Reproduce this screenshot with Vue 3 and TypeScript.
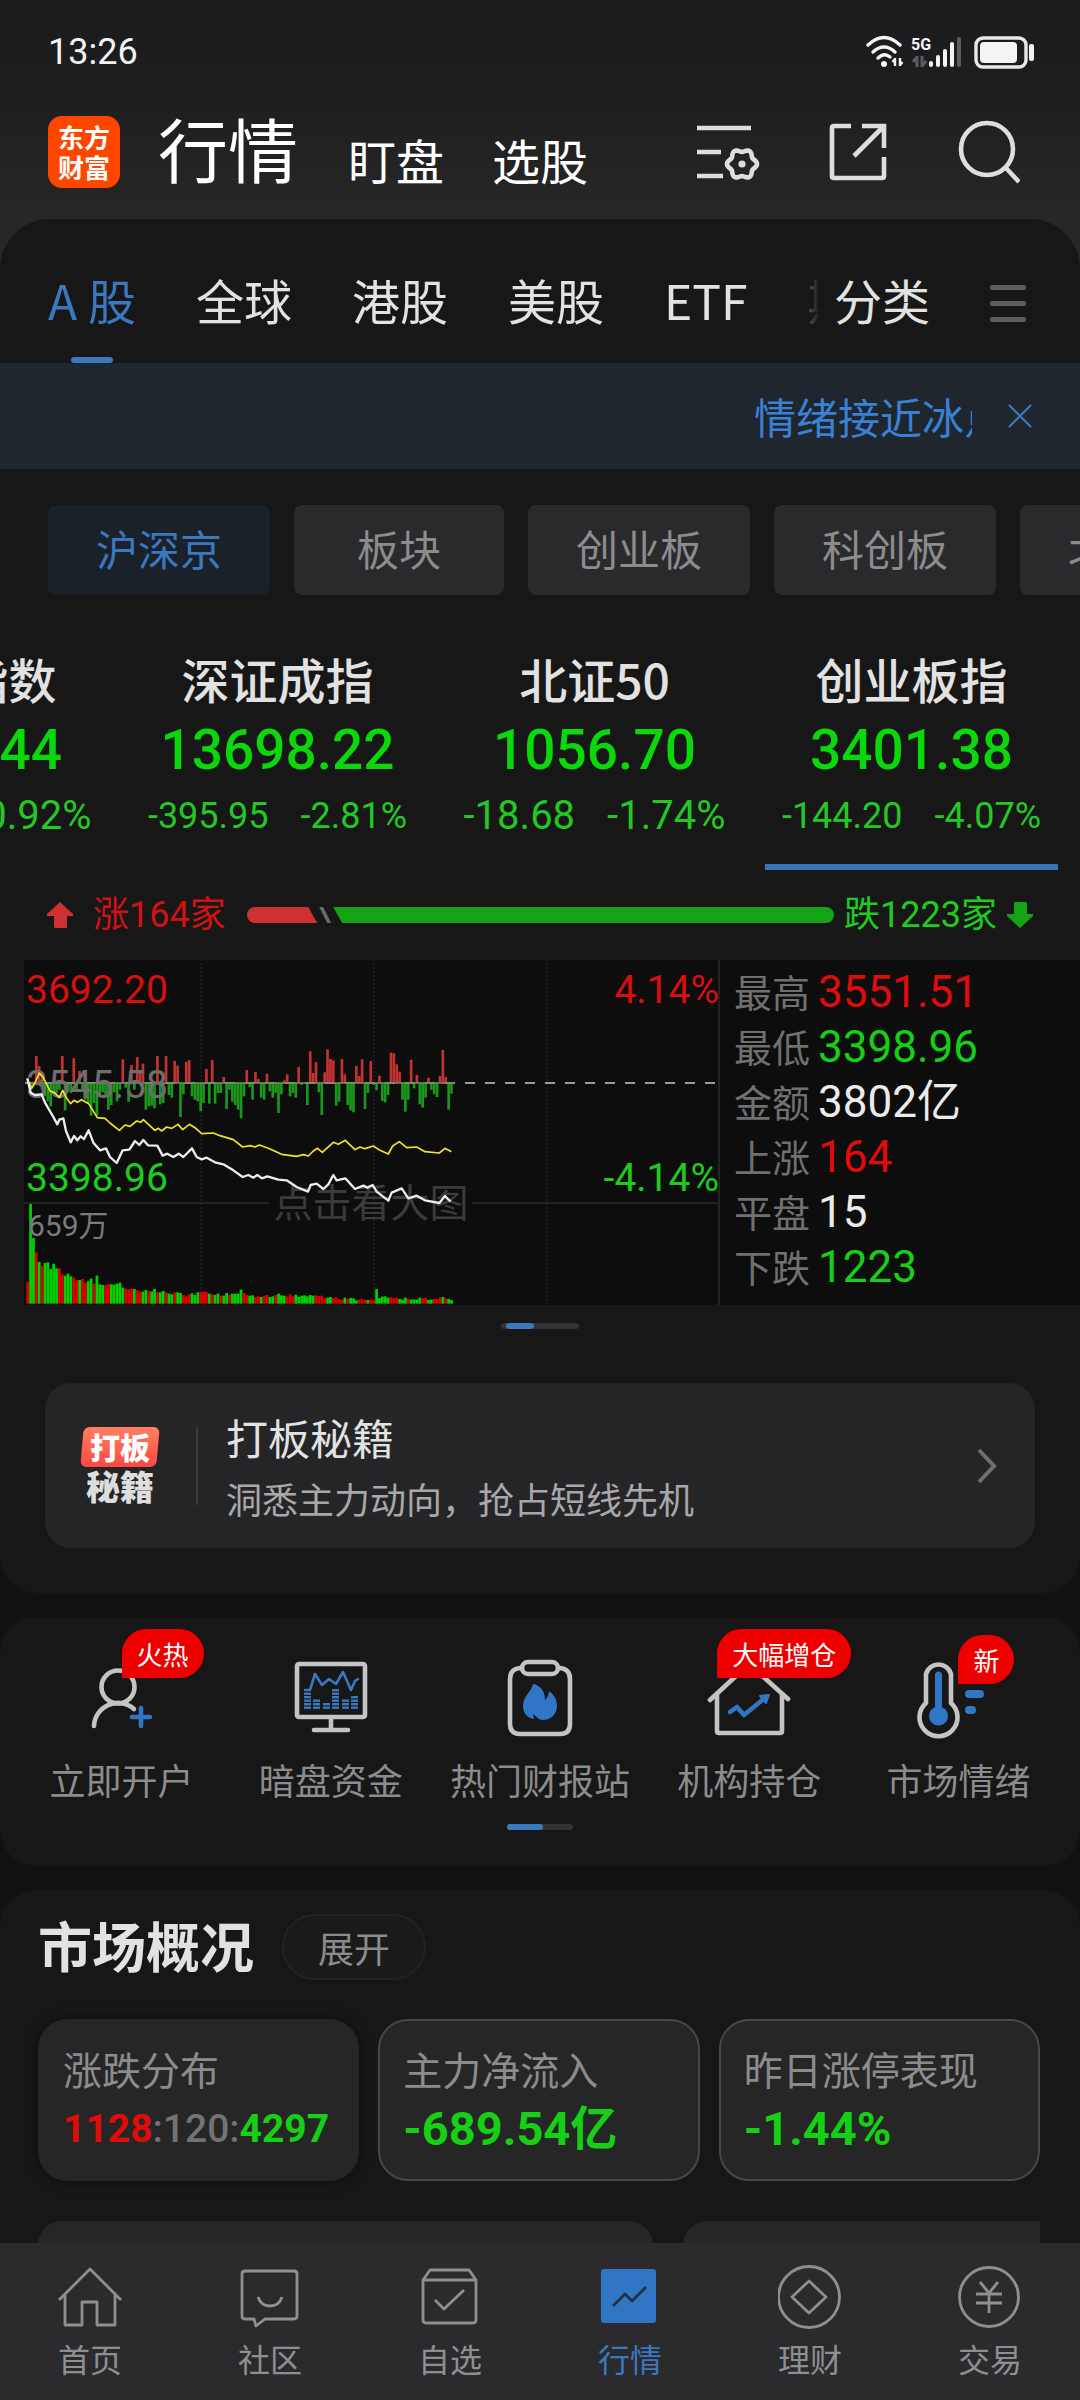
<script setup lang="ts">
import { ref } from 'vue'

interface IndexQuote {
  name: string
  value: string
  change: string
  percent: string
  compact: boolean
}

interface Stat {
  label: string
  value: string
  tone: string
}

const sections = ['盯盘', '选股']
const markets = ['A 股', '全球', '港股', '美股', 'ETF', '期货']
const activeMarket = ref('A 股')

const boards = ['沪深京', '板块', '创业板', '科创板', '北交所']
const activeBoard = ref('沪深京')

const quotes: IndexQuote[] = [
  { name: '上证指数', value: '3954.44', change: '-36.62', percent: '-0.92%', compact: false },
  { name: '深证成指', value: '13698.22', change: '-395.95', percent: '-2.81%', compact: true },
  { name: '北证50', value: '1056.70', change: '-18.68', percent: '-1.74%', compact: false },
  { name: '创业板指', value: '3401.38', change: '-144.20', percent: '-4.07%', compact: true },
]
const activeQuote = ref('创业板指')

const stats: Stat[] = [
  { label: '最高', value: '3551.51', tone: 'up' },
  { label: '最低', value: '3398.96', tone: 'down' },
  { label: '金额', value: '3802亿', tone: 'flat' },
  { label: '上涨', value: '164', tone: 'up' },
  { label: '平盘', value: '15', tone: 'flat' },
  { label: '下跌', value: '1223', tone: 'down' },
]

const tools = [
  { id: 'account', label: '立即开户', badge: '火热' },
  { id: 'monitor', label: '暗盘资金', badge: '' },
  { id: 'report', label: '热门财报站', badge: '' },
  { id: 'holding', label: '机构持仓', badge: '大幅增仓' },
  { id: 'mood', label: '市场情绪', badge: '新' },
]

const navItems = ['首页', '社区', '自选', '行情', '理财', '交易']
const activeNav = ref('行情')

/* Per-minute series, in thirds of a chart unit */
const STEP = 8.65
const BASE = 126
const FLOOR = 788

const momentum: number[] = [
  0, -16, -10, 81, 51, -20, -40, -55, -70, -30, -30, -20, 81, -82, -25, -30, 74, -20, 36, -25,
  -50, -60, -98, -60, -98, -40, -28, -35, -80, -66, -28, -55, -20, 71, -14, -56, 54, -20, 78, 36,
  58, -80, -70, -68, -76, 81, -64, -60, 81, -36, -44, 66, 52, -102, -34, 63, 69, -40, -50, -55,
  -84, -60, 42, -62, 69, -62, -30, -30, 18, -78, -20, -56, -66, -80, -106, -40, 39, -12, -50, 33,
  12, -44, -50, 28, -25, -44, -30, -90, -34, 8, 26, -40, -30, -44, 48, -6, 0, -66, 95, 30,
  63, -28, -96, 32, 101, 72, 68, -68, -56, 72, 26, -66, -82, -88, 51, 21, 71, -78, -30, 66,
  -6, -22, 22, -54, -58, -36, 91, 89, 56, 34, -50, -86, -50, 70, -16, 24, -64, -74, -44, 16,
  -20, -34, -42, 21, 99, 18, -80, -32,
]

const volume: number[] = [
  65, 299, 197, 154, 125, 113, 122, 124, 104, 120, 106, 106, 88, 84, 90, 82, 78, 70, 71, 74,
  62, 67, 75, 60, 84, 58, 56, 56, 58, 58, 57, 60, 63, 48, 45, 43, 45, 44, 40, 37,
  36, 41, 38, 36, 44, 34, 34, 38, 34, 30, 28, 34, 34, 32, 26, 22, 28, 31, 26, 34,
  35, 36, 35, 30, 28, 26, 30, 24, 24, 32, 26, 30, 30, 30, 42, 32, 26, 24, 25, 20,
  22, 20, 24, 26, 20, 22, 26, 30, 25, 24, 21, 28, 22, 27, 20, 24, 25, 22, 26, 24,
  25, 23, 24, 16, 18, 20, 17, 19, 14, 12, 18, 14, 17, 16, 10, 12, 14, 12, 11, 12,
  10, 44, 17, 21, 22, 18, 19, 17, 18, 14, 12, 18, 15, 12, 13, 12, 18, 16, 18, 11,
  12, 14, 14, 18, 20, 16, 14, 11,
]

const volumeTone =
  'rggrgrgggggrrggg' + 'rrgrrggrgggrrggg' + 'ggrrrgrrggrggrgg' + 'rggrggrrrgggrrrg' +
  'rggrggrggggrrggr' + 'rgrrggrgggrrrggg' + 'ggggrrrrggrrrrgr' + 'gggrrrgrrgggggrr' +
  'rgggrggggrrggrrrgrgg'

const priceLine =
  '22,112 32,155 45,162 65,160 75,185 100,228 112,250 118,236 130,232 138,270 152,304 162,285 172,298 182,286 192,294 206,268 220,305 240,328 258,322 270,348 290,366 308,328 328,326 345,300 358,312 370,297 384,313 412,314 428,344 442,338 460,348 476,338 490,348 516,322 530,348 545,355 560,350 585,364 610,370 640,388 668,408 685,402 700,410 712,402 726,412 742,406 775,416 800,418 830,438 864,452 872,432 890,428 910,444 925,430 940,402 950,418 976,412 1005,444 1030,434 1042,440 1058,432 1070,452 1105,479 1115,455 1145,442 1165,472 1190,464 1215,478 1258,486 1275,465 1292,482'

const averageLine =
  '22,115 35,142 45,125 58,96 70,110 90,150 105,156 118,170 128,148 140,172 152,188 162,178 172,184 185,176 206,188 232,230 255,232 270,246 298,268 315,252 330,256 350,240 362,244 370,236 385,250 405,268 415,262 425,270 440,258 455,262 474,250 488,266 508,250 525,260 545,278 580,276 600,284 640,296 668,318 690,314 705,318 718,312 745,322 785,340 830,346 850,341 865,345 880,330 893,322 907,334 940,304 955,310 976,298 1005,326 1020,318 1035,323 1060,315 1080,328 1105,339 1118,315 1138,302 1160,320 1190,318 1215,332 1258,336 1275,322 1294,332'

const gearPath =
  Array.from({ length: 72 }, (_, i) => {
    const angle = (i / 72) * Math.PI * 2
    const radius = 13.5 + 1.5 * Math.cos(angle * 6)
    const x = 46 + radius * Math.cos(angle)
    const y = 44 + radius * Math.sin(angle)
    return `${i === 0 ? 'M' : 'L'}${x.toFixed(2)} ${y.toFixed(2)}`
  }).join('') + 'Z'

const equalizer = [
  { x: 18, rows: 5 },
  { x: 27, rows: 3 },
  { x: 37, rows: 2 },
  { x: 46, rows: 6 },
  { x: 56, rows: 3 },
  { x: 65, rows: 4 },
]
</script>

<template>
  <div class="app">
    <main class="scroll">
      <div class="top">
        <div class="status">
          <span class="num clock">13:26</span>
          <svg width="171" height="36" viewBox="0 0 171 36" fill="none" aria-hidden="true">
            <g stroke="#f4f4f4" stroke-width="3.4" stroke-linecap="round">
              <path d="M4 11Q20 -4 36 11" />
              <path d="M9 18Q20 8 31 18" />
              <path d="M14 24Q20 18 26 23" />
            </g>
            <circle cx="20" cy="30" r="3" fill="#f4f4f4" />
            <path d="M31 24V32M31 25L28.500 28M36 24V32M36 31L38.500 28" stroke="#f4f4f4" stroke-width="2.400" />
            <text x="47" y="16" class="net">5G</text>
            <path d="M53 22V33M53 23L49 28M58 22V33M58 32L62 27" stroke="#5c5c5e" stroke-width="3" />
            <g fill="#f4f4f4">
              <rect x="65" y="27" width="4" height="6" rx="2" />
              <rect x="72" y="21" width="4" height="12" rx="2" />
              <rect x="79" y="15" width="4" height="18" rx="2" />
              <rect x="86" y="8" width="4" height="25" rx="2" />
            </g>
            <rect x="93" y="3" width="4" height="30" rx="2" fill="#5c5c5e" />
            <rect x="112" y="4" width="50" height="29" rx="7" stroke="#e8e8e6" stroke-width="3.400" />
            <rect x="116" y="8" width="37" height="21" rx="4" fill="#f4f4f4" />
            <rect x="165" y="10" width="5" height="17" rx="2" fill="#f4f4f4" />
          </svg>
        </div>
        <header class="header">
          <div class="logo"><span>东方</span><span>财富</span></div>
          <h1>行情</h1>
          <div class="sections">
            <button v-for="s in sections" :key="s" type="button">{{ s }}</button>
          </div>
          <div class="actions">
            <button type="button" aria-label="设置">
              <svg width="64" height="64" viewBox="0 0 64 64" fill="none" stroke="#dedede" stroke-width="4.600">
                <path d="M1 8H55M1 32H25M1 56H27" />
                <path :d="gearPath" />
                <circle cx="46" cy="44" r="3.600" fill="#dedede" stroke="none" />
              </svg>
            </button>
            <button type="button" aria-label="分享">
              <svg width="64" height="64" viewBox="0 0 64 64" fill="none" stroke="#dedede" stroke-width="4.600">
                <path d="M25 6H8Q6 6 6 8V56Q6 58 8 58H56Q58 58 58 56V37M36 6H58V28M58 6L28 36" />
              </svg>
            </button>
            <button type="button" aria-label="搜索">
              <svg width="64" height="64" viewBox="0 0 64 64" fill="none" stroke="#dedede" stroke-width="4.600">
                <circle cx="31" cy="29" r="26" />
                <path d="M50 48L63 62" />
              </svg>
            </button>
          </div>
        </header>
      </div>

      <section class="panel first">
        <nav class="tabs">
          <div class="tab-list">
            <button
              v-for="m in markets"
              :key="m"
              type="button"
              :class="{ active: m === activeMarket }"
              @click="activeMarket = m"
            >
              {{ m }}
            </button>
          </div>
          <button type="button" class="category">分类</button>
          <button type="button" class="menu" aria-label="菜单"><i></i><i></i><i></i></button>
        </nav>

        <div class="notice">
          <p>情绪接近冰点</p>
          <button type="button" aria-label="关闭">
            <svg width="24" height="24" viewBox="0 0 24 24" stroke="#3a7cc8" stroke-width="2">
              <path d="M1 1L23 23M23 1L1 23" />
            </svg>
          </button>
        </div>

        <div class="chips">
          <button
            v-for="b in boards"
            :key="b"
            type="button"
            :class="{ active: b === activeBoard }"
            @click="activeBoard = b"
          >
            {{ b }}
          </button>
        </div>

        <div class="quotes">
          <article
            v-for="q in quotes"
            :key="q.name"
            :class="['quote', { active: q.name === activeQuote }]"
            @click="activeQuote = q.name"
          >
            <h2>{{ q.name }}</h2>
            <strong class="num">{{ q.value }}</strong>
            <p :class="['num', { compact: q.compact }]">
              <span>{{ q.change }}</span><span>{{ q.percent }}</span>
            </p>
          </article>
        </div>

        <div class="breadth">
          <svg width="26" height="26" viewBox="0 0 26 26" fill="#cd3131"><path d="M13 0L26 12V14H20V25L19 26H8L7 25V14H0V12Z" /></svg>
          <span class="num rise">涨164家</span>
          <div class="ratio"><i class="ratio-up"></i><i class="ratio-flat"></i><i class="ratio-down"></i></div>
          <span class="num fall">跌1223家</span>
          <svg width="26" height="26" viewBox="0 0 26 26" fill="#14a314"><path d="M13 26L26 14V12H20V1L19 0H8L7 1V12H0V14Z" /></svg>
        </div>

        <div class="board">
          <div class="chart">
            <svg viewBox="0 0 696 345" role="img" aria-label="分时走势">
              <g stroke="#1c1c1c" stroke-width="2">
                <path d="M177 3V344M350 3V344M523 3V344" stroke-dasharray="2 2" />
                <path d="M0 243H245M448 243H695M695 0V345" stroke="#232323" />
              </g>
              <path d="M1 123H694" stroke="#9a9a9a" stroke-width="2" stroke-dasharray="10 10" />
              <g transform="translate(-4 81) scale(0.33333)">
                <rect
                  v-for="(m, i) in momentum"
                  :key="'m' + i"
                  :x="19 + i * STEP"
                  :y="m > 0 ? BASE - m : BASE"
                  width="8"
                  :height="Math.abs(m)"
                  :fill="m > 0 ? '#c43232' : '#1b971b'"
                />
                <path d="M19 126H1304" stroke="#7a8f6a" stroke-width="4" />
                <rect
                  v-for="(v, i) in volume"
                  :key="'v' + i"
                  :x="19 + i * STEP"
                  :y="FLOOR - v"
                  width="8.2"
                  :height="v"
                  :fill="volumeTone[i] === 'r' ? '#e00000' : '#00d200'"
                />
              </g>
              <g class="axis">
                <text x="2" y="43" fill="#d80f0f">3692.20</text>
                <text x="2" y="138" fill="#6e6e6e">3545.58</text>
                <text x="2" y="231" fill="#1fcb1f">3398.96</text>
                <text x="695" y="43" text-anchor="end" fill="#d80f0f">4.14%</text>
                <text x="695" y="231" text-anchor="end" fill="#1fcb1f">-4.14%</text>
                <text x="4" y="276" class="small" fill="#7b7b7b">659万</text>
                <text x="347" y="257" text-anchor="middle" fill="#3b3b3b">点击看大图</text>
              </g>
              <g transform="translate(-4 81) scale(0.33333)" fill="none" stroke-linejoin="round">
                <polyline :points="averageLine" stroke="#f2e32a" stroke-width="5" />
                <polyline :points="priceLine" stroke="#ececec" stroke-width="7" />
              </g>
            </svg>
          </div>
          <dl class="stats">
            <div v-for="s in stats" :key="s.label">
              <dt>{{ s.label }}</dt>
              <dd :class="['num', s.tone]">{{ s.value }}</dd>
            </div>
          </dl>
        </div>

        <div class="pager inset"><i></i></div>

        <a href="#" class="promo">
          <span class="promo-logo"><b>打板</b><em>秘籍</em></span>
          <span class="promo-text"><strong>打板秘籍</strong><small>洞悉主力动向，抢占短线先机</small></span>
          <svg width="20" height="36" viewBox="0 0 20 36" fill="none" stroke="#6f6f71" stroke-width="4"><path d="M2 2L17 18L2 34" /></svg>
        </a>
      </section>

      <section class="panel tools-panel">
        <div class="tools">
          <button v-for="t in tools" :key="t.id" type="button" class="tool">
            <span class="tool-icon">
              <svg width="90" height="90" viewBox="0 0 90 90" fill="none" stroke="#c4c4c4" stroke-width="4.600" stroke-linecap="round" stroke-linejoin="round">
                <template v-if="t.id === 'account'">
                  <circle cx="41" cy="34" r="16.500" />
                  <path d="M17 73A24 24 0 0 1 57 56" />
                  <path d="M64 55V73M55 64H73" stroke="#3176c5" />
                </template>
                <template v-else-if="t.id === 'monitor'">
                  <rect x="11" y="11" width="68" height="53" rx="2" />
                  <path d="M45 64V76M28 77H62" />
                  <path d="M19 37H24L29 21L36 32L43 26L50 31L57 19L65 37L69 28L72 26" stroke="#3a78c0" stroke-width="2.600" />
                  <template v-for="bar in equalizer" :key="bar.x">
                    <rect
                      v-for="row in bar.rows"
                      :key="row"
                      :x="bar.x"
                      :y="57 - row * 3.5"
                      width="7"
                      height="2.400"
                      fill="#3a78c0"
                      stroke="none"
                    />
                  </template>
                </template>
                <template v-else-if="t.id === 'report'">
                  <path d="M27 15H25Q15 16 15 26V71Q15 81 25 81H65Q75 81 75 71V26Q75 16 65 15H63" />
                  <rect x="27" y="9" width="36" height="12" rx="6" />
                  <path d="M38 31C37 38 28 43 28 53C28 60 32 65 39 66L38 61C42 64 44 67 48 67C56 67 62 61 62 53C62 46 59 42 54 38C54 42 52 45 50 47C50 38 45 32 38 31Z" fill="#3176c5" stroke="none" />
                </template>
                <template v-else-if="t.id === 'holding'">
                  <path d="M6 47L45 11L84 46M13 42V78Q13 80 15 80H76Q78 80 78 78V42" />
                  <path d="M26 59L33 54L40 62L62 44" stroke="#3176c5" />
                  <path d="M65 42L56 43L62 50Z" fill="#3176c5" stroke="#3176c5" stroke-width="2" />
                </template>
                <template v-else>
                  <path d="M13 50V21A13 13 0 0 1 38 21V50A19 19 0 1 1 13 50Z" />
                  <circle cx="25.500" cy="63" r="9.500" fill="#3176c5" stroke="none" />
                  <path d="M25.500 22V60" stroke="#3176c5" stroke-width="7" />
                  <path d="M56 41H67M56 57H59" stroke="#3176c5" stroke-width="8" />
                </template>
              </svg>
              <span v-if="t.badge" :class="['badge', t.id]">{{ t.badge }}</span>
            </span>
            <span class="tool-label">{{ t.label }}</span>
          </button>
        </div>
        <div class="pager"><i></i></div>
      </section>

      <section class="panel overview">
        <div class="overview-head">
          <h2>市场概况</h2>
          <button type="button">展开</button>
        </div>
        <div class="cards">
          <article class="raised">
            <h3>涨跌分布</h3>
            <p class="num split"><span class="up">1128</span><span class="even">:120:</span><span class="down">4297</span></p>
          </article>
          <article>
            <h3>主力净流入</h3>
            <p class="num down">-689.54亿</p>
          </article>
          <article>
            <h3>昨日涨停表现</h3>
            <p class="num down">-1.44%</p>
          </article>
        </div>
        <div class="more"><div></div><div></div></div>
      </section>
    </main>

    <nav class="bottom">
      <button
        v-for="n in navItems"
        :key="n"
        type="button"
        :class="{ active: n === activeNav }"
        @click="activeNav = n"
      >
        <svg width="64" height="64" viewBox="0 0 64 64" fill="none" stroke="currentColor" stroke-width="2.800" stroke-linejoin="round">
          <path v-if="n === '首页'" d="M1 35L32 4L63 35M7 30V60H24V37H39V60H57V30" />
          <template v-else-if="n === '社区'">
            <path d="M7 6H56Q59 6 59 9V51Q59 54 56 54H27L18 61L16 54H7Q4 54 4 51V9Q4 6 7 6Z" />
            <path d="M20 32Q23 41 32 41Q41 41 44 32" />
          </template>
          <template v-else-if="n === '自选'">
            <path d="M5 15L12 5H51L58 15V55Q58 58 55 58H8Q5 58 5 55ZM5 15H58" />
            <path d="M17 35L26 44L46 25" />
          </template>
          <template v-else-if="n === '行情'">
            <rect x="3" y="4" width="55" height="54" rx="3" fill="#3176c5" stroke="none" />
            <path d="M15 41L27 29L34 36L48 22" stroke="#203040" />
          </template>
          <template v-else-if="n === '理财'">
            <circle cx="31" cy="32" r="30.500" />
            <path d="M31 16L48 32L31 48L14 32Z" />
          </template>
          <template v-else>
            <circle cx="31" cy="32" r="29.500" />
            <path d="M22 17L31 28L40 17M31 28V48M18 29H44M18 38H44" />
          </template>
        </svg>
        <span>{{ n }}</span>
      </button>
    </nav>
  </div>
</template>

<style>
body {
  margin: 0;
  background: #111111;
}
</style>

<style scoped>
.app {
  display: flex;
  flex-direction: column;
  height: 100vh;
  background: #111111;
  color: #e2e2e2;
  font-family: "Noto Sans CJK SC", sans-serif;
}
.app *,
.app *::after {
  box-sizing: border-box;
}
h1,
h2,
h3,
p,
dl,
dd {
  margin: 0;
  font-weight: 400;
}
button {
  border: 0;
  padding: 0;
  background: none;
  color: inherit;
  font: inherit;
  white-space: nowrap;
}
svg {
  display: block;
  flex: none;
}
.num {
  font-family: Roboto, "Noto Sans CJK SC", sans-serif;
}
.up {
  color: #e00b0b;
}
.down {
  color: #16d016;
}
.flat {
  color: #ebebeb;
}
.scroll {
  flex: 1;
  min-height: 0;
  overflow: hidden;
}

.top {
  margin-bottom: -60px;
  padding-bottom: 80px;
  background: linear-gradient(#1b1b1d, #1e1e20 90px, #272727 220px);
}
.status {
  display: flex;
  align-items: center;
  justify-content: space-between;
  height: 104px;
  padding: 0 45px 0 48px;
}
.clock {
  font-size: 36px;
  color: #f4f4f4;
}
.net {
  font: 700 16px Roboto, sans-serif;
  fill: #f4f4f4;
}
.header {
  display: flex;
  align-items: center;
  height: 95px;
  padding: 0 60px 0 48px;
  color: #ffffff;
}
.logo {
  display: flex;
  flex-direction: column;
  align-items: center;
  justify-content: center;
  width: 72px;
  height: 72px;
  margin-right: 38px;
  border-radius: 14px;
  background: #ff4600;
  font-size: 26px;
  font-weight: 700;
  line-height: 30px;
}
h1 {
  padding-bottom: 8px;
  font-size: 70px;
  line-height: 86px;
}
.sections {
  display: flex;
  gap: 48px;
  margin-left: 50px;
  padding-top: 14px;
  font-size: 48px;
  line-height: 60px;
}
.actions {
  display: flex;
  gap: 66px;
  margin-left: auto;
}

.panel {
  position: relative;
  margin-bottom: 24px;
  border-radius: 36px;
  background: #171717;
}
.first {
  border-radius: 50px 50px 36px 36px;
  padding-bottom: 45px;
}
.tabs {
  display: flex;
  align-items: center;
  height: 144px;
  padding: 24px 54px 0 48px;
  font-size: 48px;
}
.tab-list {
  display: flex;
  flex: 1;
  gap: 60px;
  min-width: 0;
  height: 120px;
  overflow: hidden;
  margin-right: 14px;
  -webkit-mask: linear-gradient(to left, transparent, #000 40px);
  mask: linear-gradient(to left, transparent, #000 40px);
}
.tab-list button,
.category {
  position: relative;
  padding-bottom: 8px;
  line-height: 112px;
}
.tab-list .active {
  color: #3a78c0;
}
.tab-list .active::after {
  content: "";
  position: absolute;
  bottom: 0;
  left: calc(50% - 21px);
  width: 42px;
  height: 6px;
  border-radius: 3px;
  background: #3a78c0;
}
.menu {
  display: flex;
  flex-direction: column;
  gap: 11px;
  margin-left: 60px;
}
.menu i {
  width: 36px;
  height: 5px;
  border-radius: 2px;
  background: #5e5e5e;
}
.notice {
  display: flex;
  align-items: center;
  justify-content: flex-end;
  gap: 36px;
  height: 106px;
  padding-right: 48px;
  background: #1f262e;
  color: #3a80d4;
}
.notice p {
  width: 218px;
  overflow: hidden;
  font-size: 42px;
  line-height: 60px;
  white-space: nowrap;
}
.chips {
  display: flex;
  gap: 24px;
  margin-top: 36px;
  padding-left: 48px;
  overflow: hidden;
}
.chips button {
  flex: none;
  min-width: 210px;
  height: 90px;
  padding: 0 48px 4px;
  border-radius: 8px;
  background: #2a2a2c;
  color: #8c8c8e;
  font-size: 42px;
  line-height: 86px;
}
.chips .active {
  background: #1a2129;
  color: #3a78c0;
}
.quotes {
  display: flex;
  justify-content: flex-end;
  gap: 24px;
  margin-top: 53px;
  padding-right: 22px;
  overflow: hidden;
}
.quote {
  display: flex;
  flex: none;
  flex-direction: column;
  align-items: center;
  width: 293px;
  border-bottom: 6px solid transparent;
  padding-bottom: 24px;
}
.quote.active {
  border-image: linear-gradient(#3a74b8, #3a74b8) 1;
}
.quote h2 {
  font-size: 48px;
  font-weight: 500;
  line-height: 60px;
}
.quote strong {
  color: #0bd80b;
  font-size: 55px;
  font-weight: 500;
  line-height: 84px;
}
.quote p {
  display: flex;
  gap: 32px;
  color: #24c824;
  font-size: 40px;
  line-height: 48px;
}
.quote .compact {
  font-size: 36px;
}
.breadth {
  display: flex;
  align-items: center;
  height: 42px;
  margin: 24px 0;
  padding: 0 47px;
  font-size: 36px;
  line-height: 42px;
}
.rise {
  margin: 0 21px 0 20px;
  color: #d01212;
}
.fall {
  margin: 0 10px;
  color: #1fcb1f;
}
.ratio {
  display: flex;
  flex: 1;
  gap: 2px;
  height: 16px;
}
.ratio-up {
  flex: 0 0 12%;
  border-radius: 8px 0 0 8px;
  background: #cd3131;
  clip-path: polygon(0 0, calc(100% - 9px) 0, 100% 100%, 0 100%);
}
.ratio-flat {
  width: 12px;
  background: #6a6a6a;
  clip-path: polygon(0 0, 4px 0, 100% 100%, 8px 100%);
}
.ratio-down {
  flex: 1;
  border-radius: 0 8px 8px 0;
  background: #14a314;
  clip-path: polygon(0 0, 100% 0, 100% 100%, 9px 100%);
}
.board {
  display: flex;
  margin-left: 24px;
  background: #0d0d0d;
}
.chart {
  flex: 1;
}
.chart svg {
  width: 100%;
}
.axis text {
  font: 39px Roboto, "Noto Sans CJK SC", sans-serif;
}
.axis .small {
  font-size: 30px;
}
.stats {
  flex: 0 0 360px;
  padding: 5px 0 0 14px;
}
.stats div {
  display: flex;
  align-items: center;
  gap: 8px;
  height: 55px;
}
.stats dt {
  padding-bottom: 4px;
  color: #707070;
  font-size: 38px;
  line-height: 51px;
}
.stats dd {
  font-size: 44px;
  line-height: 55px;
}
.pager {
  width: 66px;
  height: 6px;
  margin: 18px auto 0;
  border-radius: 3px;
  background: #333335;
}
.pager i {
  display: block;
  width: 36px;
  height: 6px;
  border-radius: 3px;
  background: #3a78c0;
}
.pager.inset {
  width: 78px;
  padding-left: 5px;
}
.pager.inset i {
  width: 28px;
}
.promo {
  display: flex;
  align-items: center;
  height: 165px;
  margin: 54px 45px 0;
  padding: 0 38px 0 35px;
  border-radius: 26px;
  background: #252527;
  color: #e2e2e2;
  text-decoration: none;
}
.promo-logo {
  display: flex;
  flex-direction: column;
  gap: 2px;
  align-items: center;
  width: 80px;
  margin-right: 36px;
  font-size: 34px;
  font-weight: 900;
  line-height: 38px;
}
.promo-logo b {
  position: relative;
  z-index: 0;
  width: 76px;
  color: #ffffff;
  font-size: 30px;
  font-weight: 900;
  text-align: center;
}
.promo-logo b::before {
  content: "";
  position: absolute;
  z-index: -1;
  inset: 0 0 -2px;
  border-radius: 6px;
  background: linear-gradient(#ff8062, #fb4743);
  transform: skewX(-5deg);
}
.promo-logo em {
  color: #dedede;
  font-style: normal;
}
.promo-text {
  display: flex;
  flex: 1;
  flex-direction: column;
  height: 122px;
  padding-left: 30px;
  background: linear-gradient(#3a3a3c, #3a3a3c) 0 50% / 2px 78px no-repeat;
}
.promo-text strong {
  font-size: 42px;
  font-weight: 400;
  line-height: 64px;
}
.promo-text small {
  color: #a8a8aa;
  font-size: 36px;
  line-height: 58px;
}

.tools-panel {
  padding: 36px 0;
}
.tools {
  display: flex;
  padding: 0 17px;
}
.tool {
  display: flex;
  flex: 1 1 0;
  flex-direction: column;
  align-items: center;
  gap: 12px;
  min-width: 0;
}
.tool-icon {
  position: relative;
}
.badge {
  position: absolute;
  top: -24px;
  left: 45px;
  height: 49px;
  padding: 0 15px;
  border-radius: 25px 25px 25px 0;
  background: #ee0000;
  color: #ffffff;
  font-size: 26px;
  line-height: 49px;
}
.badge.holding {
  left: 13px;
}
.badge.mood {
  top: -18px;
}
.tool-label {
  color: #8c8c8e;
  font-size: 36px;
  line-height: 48px;
}
.tools-panel .pager {
  margin-top: 21px;
}

.overview {
  margin-bottom: 0;
  padding: 24px 40px 0 38px;
}
.overview-head {
  display: flex;
  align-items: center;
  gap: 28px;
  height: 66px;
}
.overview-head h2 {
  padding-bottom: 4px;
  font-size: 54px;
  font-weight: 700;
  line-height: 62px;
}
.overview-head button {
  height: 66px;
  padding: 0 34px;
  border: 2px solid #232323;
  border-radius: 33px;
  background: #1a1a1a;
  color: #8c8c8e;
  font-size: 36px;
  line-height: 60px;
}
.cards {
  display: flex;
  gap: 19px;
  margin-top: 39px;
}
.cards article {
  flex: 1 1 0;
  min-width: 0;
  height: 162px;
  padding: 21px 0 0 23px;
  border: 2px solid #474747;
  border-radius: 30px;
  background: #262626;
  white-space: nowrap;
}
.cards .raised {
  border-color: #262626;
  box-shadow: 0 0 12px rgba(0, 0, 0, 0.5);
}
.cards h3 {
  color: #8c8c8e;
  font-size: 39px;
  line-height: 52px;
}
.cards p {
  font-size: 47px;
  font-weight: 700;
  line-height: 70px;
}
.cards .split {
  font-size: 39px;
}
.even {
  color: #737373;
  font-weight: 500;
}
.more {
  display: flex;
  gap: 30px;
  margin-top: 40px;
}
.more div {
  flex: 357;
  height: 200px;
  border-radius: 24px 0 0 0;
  background: #262628;
}
.more div:first-child {
  flex: 615;
  border-radius: 24px 24px 0 0;
}

.bottom {
  display: flex;
  flex: none;
  height: 157px;
  background: #2b2b2d;
}
.bottom button {
  display: flex;
  flex: 1;
  flex-direction: column;
  align-items: center;
  padding-top: 22px;
  color: #8f8f91;
  font-size: 32px;
  line-height: 40px;
}
.bottom span {
  margin-top: 9px;
}
.bottom .active {
  color: #3a78c0;
}
</style>
